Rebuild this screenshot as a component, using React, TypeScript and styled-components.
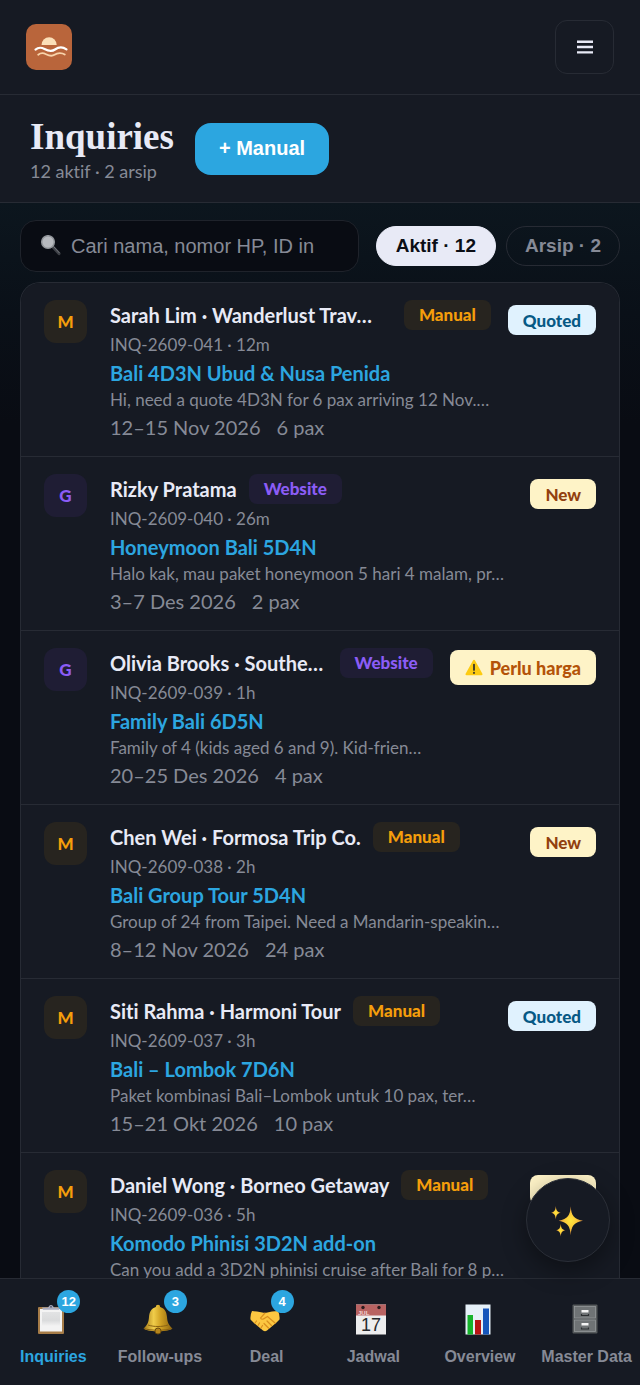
import React from "react";
import styled, { createGlobalStyle, css } from "styled-components";

const sans = `"Liberation Sans", Arial, sans-serif`;
const body = `Lato, "Open Sans", sans-serif`;
const panel = "#161a23";
const line = "#272b34";
const muted = "#868a96";
const blue = "#2ca6e0";

const Global = createGlobalStyle`
  * { box-sizing: border-box; }
  body {
    margin: 0;
    background: #090c13;
    font-family: ${body};
    font-variant-ligatures: none;
    color: #e8eaf6;
  }
  button, input { font-family: ${sans}; }
`;

const Page = styled.div`
  height: 100vh;
  display: flex;
  flex-direction: column;
  overflow: hidden;
`;

const Header = styled.header`
  flex: none;
  display: flex;
  align-items: center;
  justify-content: space-between;
  padding: 20px 26px;
  background: ${panel};
  border-bottom: 1px solid ${line};
`;

const LogoLink = styled.a`
  display: block;
  width: 46px;
  height: 46px;
`;

const MenuButton = styled.button`
  display: flex;
  align-items: center;
  justify-content: center;
  width: 59px;
  height: 54px;
  padding: 0;
  color: #e8eaf6;
  background: transparent;
  border: 1px solid ${line};
  border-radius: 12px;
`;

const TitleBar = styled.section`
  flex: none;
  display: flex;
  align-items: center;
  gap: 21px;
  height: 108px;
  padding: 0 30px;
  background: ${panel};
  border-bottom: 1px solid ${line};
`;

const TitleBlock = styled.div`
  padding-top: 4px;
`;

const Title = styled.h1`
  margin: 0;
  font: 700 37px/40px "Liberation Serif", serif;
  color: #e8eaf6;
`;

const Subtitle = styled.p`
  margin: 0;
  font-size: 18px;
  line-height: 28px;
  color: ${muted};
`;

const AddButton = styled.button`
  height: 52px;
  padding: 0 24px;
  border: 0;
  border-radius: 16px;
  background: ${blue};
  color: #fff;
  font-size: 20px;
  font-weight: 700;
`;

const Main = styled.main`
  position: relative;
  flex: 1;
  min-height: 0;
  display: flex;
  flex-direction: column;
  padding: 17px 20px 0;
  background: linear-gradient(180deg, #0c161e 0, #0a1018 110px, #090c13 220px);
`;

const Toolbar = styled.div`
  flex: none;
  display: flex;
  align-items: center;
  gap: 17px;
  margin-bottom: 10px;
`;

const SearchBox = styled.label`
  flex: 1;
  min-width: 0;
  display: flex;
  align-items: center;
  gap: 9px;
  height: 52px;
  padding: 0 19px;
  background: #090c13;
  border: 1px solid #1f232b;
  border-radius: 16px;
`;

const SearchInput = styled.input`
  flex: 1;
  min-width: 0;
  padding: 0;
  border: 0;
  outline: 0;
  background: transparent;
  color: #e8eaf6;
  font-size: 20px;
  &::placeholder { color: ${muted}; opacity: 1; }
`;

const Pills = styled.div`
  display: flex;
  align-items: center;
  gap: 10px;
`;

const Pill = styled.button<{ $active?: boolean }>`
  height: 40px;
  padding: 0 ${(p) => (p.$active ? 19 : 18)}px;
  border-radius: 20px;
  border: 1px solid ${(p) => (p.$active ? "#e8eaf6" : line)};
  background: ${(p) => (p.$active ? "#e8eaf6" : "transparent")};
  color: ${(p) => (p.$active ? "#0b0e15" : muted)};
  font-size: 19px;
  font-weight: 700;
`;

const List = styled.ul`
  flex: 1;
  min-height: 0;
  margin: 0;
  padding: 0;
  list-style: none;
  overflow-y: auto;
  scrollbar-width: none;
  background: ${panel};
  border: 1px solid ${line};
  border-bottom: 0;
  border-radius: 20px 20px 0 0;
`;

const Row = styled.li`
  display: flex;
  align-items: flex-start;
  height: 174px;
  padding: 17px 23px 0;
  border-bottom: 1px solid ${line};
`;

const tones = {
  manual: css`background: #27241f; color: #f59e0b;`,
  website: css`background: #1f1d34; color: #8b5cf6;`,
  quoted: css`background: #e0f2fe; color: #075985;`,
  new: css`background: #fef3c7; color: #92400e;`,
  price: css`background: #fef3c7; color: #b45309;`,
};
type Tone = keyof typeof tones;

const Source = styled.span<{ $tone: Tone }>`
  flex: none;
  display: grid;
  place-items: center;
  width: 43px;
  height: 43px;
  margin-right: 23px;
  border-radius: 12px;
  font-size: 17px;
  font-weight: 900;
  ${(p) => tones[p.$tone]}
`;

const Details = styled.div`
  flex: 1;
  min-width: 0;
  white-space: nowrap;
`;

const NameLine = styled.div`
  display: flex;
  align-items: center;
  gap: 12px;
  height: 30px;
`;

const Name = styled.h2<{ $fill: boolean }>`
  flex: ${(p) => (p.$fill ? "1" : "none")};
  margin: 0;
  font-size: 20px;
  font-weight: 700;
  line-height: 30px;
`;

const Tag = styled.span<{ $tone: Tone }>`
  flex: none;
  padding: 0 15px;
  border-radius: 8px;
  font-size: 17px;
  font-weight: 900;
  line-height: 30px;
  ${(p) => tones[p.$tone]}
`;

const Meta = styled.p`
  margin: 0;
  font-size: 17px;
  line-height: 30px;
  color: ${muted};
`;

const Trip = styled.p`
  margin: 0;
  font-size: 20px;
  font-weight: 700;
  line-height: 26px;
  color: ${blue};
`;

const Snippet = styled.p`
  margin: 0;
  font-size: 17px;
  line-height: 28px;
  color: ${muted};
`;

const Dates = styled.p`
  display: flex;
  gap: 16px;
  margin: 0;
  font-size: 20px;
  line-height: 26px;
  color: ${muted};
`;

const Status = styled.span<{ $tone: Tone }>`
  flex: none;
  display: flex;
  align-items: center;
  gap: 7px;
  height: ${(p) => (p.$tone === "price" ? 35 : 30)}px;
  margin: ${(p) => (p.$tone === "price" ? 2 : 5)}px 0 0 17px;
  padding: 0 15px;
  border-radius: 8px;
  font-size: ${(p) => (p.$tone === "price" ? 18 : 17)}px;
  font-weight: 900;
  ${(p) => tones[p.$tone]}
`;

const Assistant = styled.button`
  position: absolute;
  right: 30px;
  bottom: 16px;
  display: grid;
  place-items: center;
  width: 84px;
  height: 84px;
  padding: 0;
  border: 1px solid #2b2f38;
  border-radius: 50%;
  background: ${panel};
  box-shadow: 0 8px 24px rgba(0, 0, 0, 0.4);
`;

const Nav = styled.nav`
  flex: none;
  display: grid;
  grid-template-columns: repeat(6, minmax(0, 1fr));
  height: 107px;
  background: ${panel};
  border-top: 1px solid ${line};
`;

const Tab = styled.a<{ $active?: boolean }>`
  display: flex;
  flex-direction: column;
  align-items: center;
  gap: 12px;
  padding-top: 24px;
  white-space: nowrap;
  text-decoration: none;
  font: 700 16px/20px ${sans};
  color: ${(p) => (p.$active ? blue : muted)};
`;

const TabIcon = styled.span`
  position: relative;
  width: 36px;
  height: 32px;
`;

const Count = styled.span`
  position: absolute;
  top: -13px;
  right: -9px;
  min-width: 23px;
  border-radius: 12px;
  background: ${blue};
  color: #fff;
  font-size: 13px;
  line-height: 23px;
  text-align: center;
`;

const Logo = () => (
  <svg width="46" height="46" viewBox="0 0 46 46" aria-hidden="true">
    <rect width="46" height="46" rx="10" fill="#b9653b" />
    <path d="M15.500 21a7.600 7.800 0 0 1 15.200 0z" fill="#fbdfb8" />
    <path d="M9.500 25.600C12 23.400 15.500 23.400 18.500 25S25.500 28 29 25.500S37 22.900 40.500 25.400" fill="none" stroke="#fff" strokeWidth="2.200" strokeLinecap="round" />
    <path d="M12.200 30.800C14.500 28.900 17.500 28.900 20 30.200S25.500 32.900 28.500 30.800S36 28.700 38.800 30.600" fill="none" stroke="#f8d3aa" strokeWidth="1.800" strokeLinecap="round" />
  </svg>
);

const MenuIcon = () => (
  <svg width="16" height="14" viewBox="0 0 16 14" fill="currentColor" aria-hidden="true">
    <path d="M0 0.500h16v2.400H0zM0 5.800h16v2.400H0zM0 11.200h16v2.400H0z" />
  </svg>
);

const SearchIcon = () => (
  <svg width="22" height="22" viewBox="0 0 22 22" aria-hidden="true">
    <path d="M13 12l6 6.500" stroke="#3d4046" strokeWidth="3.200" strokeLinecap="round" />
    <path d="M13.500 11.500l6 6.500" stroke="#787c83" strokeWidth="0.900" />
    <circle cx="8" cy="7" r="6.300" fill="#b7babf" stroke="#92969b" strokeWidth="1.500" />
  </svg>
);

const WarningIcon = () => (
  <svg width="18" height="17" viewBox="0 0 18 17" aria-hidden="true">
    <path d="M8.100 1.200a1 1 0 0 1 1.800 0l7.500 13.600a1 1 0 0 1-.9 1.500h-15a1 1 0 0 1-.9-1.500z" fill="#fdcb12" />
    <path d="M9 5.500v5.500M9 13.500v.6" stroke="#2b2b2b" strokeWidth="1.700" strokeLinecap="round" />
  </svg>
);

const SparklesIcon = () => (
  <svg width="34" height="34" viewBox="0 0 34 34" aria-hidden="true">
    <defs>
      <radialGradient id="gold">
        <stop offset="0" stopColor="#ffe63c" />
        <stop offset=".5" stopColor="#fbc93a" />
        <stop offset="1" stopColor="#dc8a3c" />
      </radialGradient>
    </defs>
    <g fill="url(#gold)">
      <path d="M19.700 3.200C20.400 12.500 22.500 16 32 17.700C22.500 19.400 20.400 23 19.700 32.300C19 23 16.900 19.400 7.600 17.700C16.900 16 19 12.500 19.700 3.200z" />
      <path d="M4.800 3C5.200 7.600 6.200 9 9.800 9.700C6.200 10.400 5.200 11.800 4.800 16.600C4.400 11.800 3.400 10.400 0 9.700C3.400 9 4.400 7.600 4.800 3z" />
      <path d="M9.700 20.800C10.100 25.200 11 26.600 14.400 27.300C11 28 10.100 29.400 9.700 33.600C9.300 29.400 8.400 28 5 27.300C8.400 26.600 9.300 25.200 9.700 20.800z" />
    </g>
  </svg>
);

const ClipboardIcon = () => (
  <svg width="32" height="32" viewBox="0 0 32 32" aria-hidden="true">
    <defs>
      <linearGradient id="paper" x1="0" y1="0" x2="0" y2="1">
        <stop offset="0" stopColor="#e2e3e4" />
        <stop offset=".6" stopColor="#dadbdc" />
        <stop offset="1" stopColor="#f3f3f3" />
      </linearGradient>
    </defs>
    <rect x="3" y="4" width="26" height="27" rx="1" fill="#a67c48" />
    <rect x="5" y="6" width="22" height="22.500" fill="#f3f3f3" />
    <rect x="7" y="9" width="18" height="14" fill="url(#paper)" />
    <path d="M7 4.500h5.500q1-.3 1.500-1.300a2.300 2.300 0 0 1 4 0q.5 1 1.500 1.300H25l-1 2.200H8z" fill="#a9abbd" />
    <circle cx="16" cy="3.800" r="1" fill="#5d5f73" />
  </svg>
);

const BellIcon = () => (
  <svg width="32" height="32" viewBox="0 0 32 32" aria-hidden="true">
    <defs>
      <linearGradient id="brass">
        <stop offset="0" stopColor="#a27616" />
        <stop offset=".35" stopColor="#f0cd4a" />
        <stop offset=".6" stopColor="#cfa022" />
        <stop offset="1" stopColor="#8d6410" />
      </linearGradient>
    </defs>
    <path d="M13.800 4a2.200 2.200 0 0 1 4.400 0c4.800 1.500 6.300 5 6.800 10 .4 5 1.300 7.800 5.500 11.500-2 1.700-6 2.700-14.500 2.700S3.500 27.200 1.500 25.500C5.700 21.800 6.600 19 7 14c.5-5 2-8.500 6.800-10z" fill="url(#brass)" />
    <path d="M6 22c6 2 14 2 20 0M2 25.500c6 2.300 22 2.300 28 0" fill="none" stroke="#8a6212" />
    <circle cx="16" cy="28" r="3" fill="#b5851c" stroke="#6e4d0c" />
  </svg>
);

const HandshakeIcon = () => (
  <svg width="32" height="32" viewBox="0 0 32 32" aria-hidden="true">
    <path d="M3 8l5 .5 8 1.500 7-1.500 6-.5q2 4 1.500 8.500L27 20l-9 7.500q-2 1.300-4 0L5 20l-3.500-3.500Q1 12 3 8z" fill="#fcc741" />
    <path d="M16 10l-4.500 5q1.500 2.500 4.500 0l2.500-1.500L26 20M18 18l4.500 4.500M15 20.500l4.500 4.500M7.500 18l-1.500 2M10.500 20l-1.500 2.500M13.500 22.500l-1.500 2.500" fill="none" stroke="#d98f1f" strokeWidth="1.200" strokeLinecap="round" />
  </svg>
);

const CalendarIcon = () => (
  <svg width="32" height="32" viewBox="0 0 32 32" aria-hidden="true">
    <rect x="1" y="1.500" width="30" height="30" fill="#ededee" />
    <rect x="1" y="1.500" width="30" height="11" fill="#b96362" />
    <circle cx="8" cy="4.500" r="1.700" fill="#2b1c1e" />
    <circle cx="24" cy="4.500" r="1.700" fill="#2b1c1e" />
    <text x="3" y="11.500" fontSize="6" fontWeight="700" fill="#f1d5d4">JUL</text>
    <text x="16" y="28" fontSize="18" fontWeight="400" textAnchor="middle" fill="#26282c">17</text>
  </svg>
);

const ChartIcon = () => (
  <svg width="32" height="32" viewBox="0 0 32 32" aria-hidden="true">
    <rect x="3.500" y="1.500" width="25" height="30" fill="#e6f0f8" />
    <rect x="5.500" y="12" width="5.500" height="19.500" fill="#16b32b" />
    <rect x="13" y="17" width="6" height="14.500" fill="#b81414" />
    <rect x="21" y="5.500" width="6" height="26" fill="#1555bb" />
  </svg>
);

const CabinetIcon = () => (
  <svg width="32" height="32" viewBox="0 0 32 32" aria-hidden="true">
    <rect x="3.500" y="1.500" width="25" height="29" rx="1" fill="#55595b" />
    <rect x="5.500" y="3.500" width="21" height="11.500" fill="#6f7375" stroke="#93979a" strokeWidth=".8" />
    <rect x="5.500" y="17" width="21" height="11.500" fill="#6f7375" stroke="#93979a" strokeWidth=".8" />
    <path d="M12.500 7h7v2.600h-7zM12.500 20h7v2.600h-7z" fill="#f4f4f4" />
    <path d="M12.500 11v1.500h7V11M12.500 24.500V26h7v-1.500" fill="none" stroke="#2d3032" strokeWidth="1.200" />
  </svg>
);

interface Inquiry {
  source: "manual" | "website";
  name: string;
  meta: string;
  trip: string;
  snippet: string;
  dates?: string;
  pax?: string;
  status: "quoted" | "new" | "price";
}

const inquiries: Inquiry[] = [
  { source: "manual", name: "Sarah Lim · Wanderlust Trav…", meta: "INQ-2609-041 · 12m", trip: "Bali 4D3N Ubud & Nusa Penida", snippet: "Hi, need a quote 4D3N for 6 pax arriving 12 Nov.…", dates: "12–15 Nov 2026", pax: "6 pax", status: "quoted" },
  { source: "website", name: "Rizky Pratama", meta: "INQ-2609-040 · 26m", trip: "Honeymoon Bali 5D4N", snippet: "Halo kak, mau paket honeymoon 5 hari 4 malam, pr…", dates: "3–7 Des 2026", pax: "2 pax", status: "new" },
  { source: "website", name: "Olivia Brooks · Southe…", meta: "INQ-2609-039 · 1h", trip: "Family Bali 6D5N", snippet: "Family of 4 (kids aged 6 and 9). Kid-frien…", dates: "20–25 Des 2026", pax: "4 pax", status: "price" },
  { source: "manual", name: "Chen Wei · Formosa Trip Co.", meta: "INQ-2609-038 · 2h", trip: "Bali Group Tour 5D4N", snippet: "Group of 24 from Taipei. Need a Mandarin-speakin…", dates: "8–12 Nov 2026", pax: "24 pax", status: "new" },
  { source: "manual", name: "Siti Rahma · Harmoni Tour", meta: "INQ-2609-037 · 3h", trip: "Bali – Lombok 7D6N", snippet: "Paket kombinasi Bali–Lombok untuk 10 pax, ter…", dates: "15–21 Okt 2026", pax: "10 pax", status: "quoted" },
  { source: "manual", name: "Daniel Wong · Borneo Getaway", meta: "INQ-2609-036 · 5h", trip: "Komodo Phinisi 3D2N add-on", snippet: "Can you add a 3D2N phinisi cruise after Bali for 8 p…", status: "new" },
];

const sourceText = { manual: ["M", "Manual"], website: ["G", "Website"] };
const statusText = { quoted: "Quoted", new: "New", price: "Perlu harga" };

const tabs = [
  { label: "Inquiries", icon: ClipboardIcon, count: 12 },
  { label: "Follow-ups", icon: BellIcon, count: 3 },
  { label: "Deal", icon: HandshakeIcon, count: 4 },
  { label: "Jadwal", icon: CalendarIcon },
  { label: "Overview", icon: ChartIcon },
  { label: "Master Data", icon: CabinetIcon },
];

const InquiryRow = ({ item }: { item: Inquiry }) => (
  <Row>
    <Source $tone={item.source}>{sourceText[item.source][0]}</Source>
    <Details>
      <NameLine>
        <Name $fill={item.name.endsWith("…")}>{item.name}</Name>
        <Tag $tone={item.source}>{sourceText[item.source][1]}</Tag>
      </NameLine>
      <Meta>{item.meta}</Meta>
      <Trip>{item.trip}</Trip>
      <Snippet>{item.snippet}</Snippet>
      {item.dates && (
        <Dates>
          <span>{item.dates}</span>
          <span>{item.pax}</span>
        </Dates>
      )}
    </Details>
    <Status $tone={item.status}>
      {item.status === "price" && <WarningIcon />}
      {statusText[item.status]}
    </Status>
  </Row>
);

export default function App() {
  return (
    <Page>
      <Global />
      <Header>
        <LogoLink href="#" aria-label="Home"><Logo /></LogoLink>
        <MenuButton aria-label="Menu"><MenuIcon /></MenuButton>
      </Header>
      <TitleBar>
        <TitleBlock>
          <Title>Inquiries</Title>
          <Subtitle>12 aktif · 2 arsip</Subtitle>
        </TitleBlock>
        <AddButton>+ Manual</AddButton>
      </TitleBar>
      <Main>
        <Toolbar>
          <SearchBox>
            <SearchIcon />
            <SearchInput type="search" aria-label="Search" placeholder="Cari nama, nomor HP, ID in" />
          </SearchBox>
          <Pills>
            <Pill $active>Aktif · 12</Pill>
            <Pill>Arsip · 2</Pill>
          </Pills>
        </Toolbar>
        <List>
          {inquiries.map((item) => <InquiryRow key={item.meta} item={item} />)}
        </List>
        <Assistant aria-label="Assistant"><SparklesIcon /></Assistant>
      </Main>
      <Nav>
        {tabs.map(({ label, icon: Icon, count }, i) => (
          <Tab key={label} href="#" $active={i === 0}>
            <TabIcon>
              <Icon />
              {count && <Count>{count}</Count>}
            </TabIcon>
            {label}
          </Tab>
        ))}
      </Nav>
    </Page>
  );
}
